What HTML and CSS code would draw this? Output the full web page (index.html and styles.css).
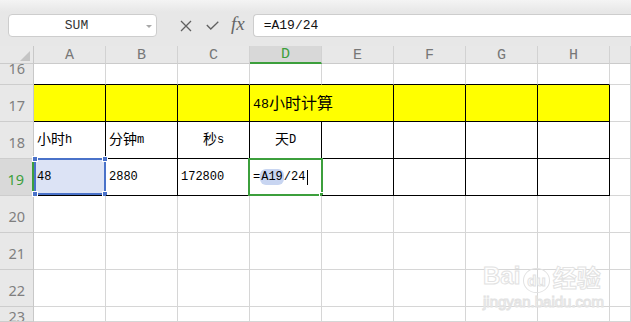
FILE: index.html
```html
<!DOCTYPE html>
<html lang="zh">
<head>
  <meta charset="UTF-8">
  <title>48小时计算</title>
  <link rel="stylesheet" href="styles.css">
</head>
<body>
  <div class="app">
    <div class="toolbar">
      <div class="namebox"><span>SUM</span><i class="caret"></i></div>
      <div class="tools">
        <svg class="ico" width="12" height="12" viewBox="0 0 12 12"><path d="M1 1 L11 11 M11 1 L1 11" stroke="#606060" stroke-width="1.3" fill="none"/></svg>
        <svg class="ico ok" width="13" height="9" viewBox="0 0 13 9"><path d="M0.8 4 L4.8 8 L12.3 0.8" stroke="#606060" stroke-width="1.3" fill="none"/></svg>
        <span class="fx">fx</span>
      </div>
      <div class="formula">=A19/24</div>
    </div>

    <div class="sheet">
      <!-- column header -->
      <div class="hd corner"><i class="tri"></i></div>
      <div class="hd">A</div>
      <div class="hd">B</div>
      <div class="hd">C</div>
      <div class="hd cur">D</div>
      <div class="hd">E</div>
      <div class="hd">F</div>
      <div class="hd">G</div>
      <div class="hd">H</div>
      <div class="hd"></div>

      <!-- 16 -->
      <div class="rh r16">16</div>
      <div class="c kb"></div><div class="c kb"></div><div class="c kb"></div><div class="c kb"></div>
      <div class="c kb"></div><div class="c kb"></div><div class="c kb"></div><div class="c kb"></div>
      <div class="c"></div>

      <!-- 17 -->
      <div class="rh">17</div>
      <div class="c k yl"></div>
      <div class="c k yl"></div>
      <div class="c k yl"></div>
      <div class="c k yl title">48<span class="cj">小时计算</span></div>
      <div class="c k yl"></div>
      <div class="c k yl"></div>
      <div class="c k yl"></div>
      <div class="c"></div>

      <!-- 18 -->
      <div class="rh">18</div>
      <div class="c k"><span class="cj">小时</span>h</div>
      <div class="c k"><span class="cj">分钟</span>m</div>
      <div class="c k mid"><span class="cj">秒</span>s</div>
      <div class="c k mid"><span class="cj">天</span>D</div>
      <div class="c k"></div>
      <div class="c k"></div>
      <div class="c k"></div>
      <div class="c k"></div>
      <div class="c"></div>

      <!-- 19 -->
      <div class="rh cur">19</div>
      <div class="c k sel">48
        <div class="sel-box"><i class="h tl"></i><i class="h tr"></i><i class="h bl"></i><i class="h br"></i></div>
      </div>
      <div class="c k">2880</div>
      <div class="c k">172800</div>
      <div class="c k">=<span class="ref">A19</span>/24<i class="caret-line"></i>
        <div class="edit-box"><i class="fill"></i></div>
      </div>
      <div class="c k"></div>
      <div class="c k"></div>
      <div class="c k"></div>
      <div class="c k"></div>
      <div class="c"></div>

      <!-- 20 -->
      <div class="rh">20</div>
      <div class="c"></div><div class="c"></div><div class="c"></div><div class="c"></div>
      <div class="c"></div><div class="c"></div><div class="c"></div><div class="c"></div>
      <div class="c"></div>

      <!-- 21 -->
      <div class="rh">21</div>
      <div class="c"></div><div class="c"></div><div class="c"></div><div class="c"></div>
      <div class="c"></div><div class="c"></div><div class="c"></div><div class="c"></div>
      <div class="c"></div>

      <!-- 22 -->
      <div class="rh">22</div>
      <div class="c"></div><div class="c"></div><div class="c"></div><div class="c"></div>
      <div class="c"></div><div class="c"></div><div class="c"></div><div class="c"></div>
      <div class="c"></div>

      <!-- 23 -->
      <div class="rh">23</div>
      <div class="c"></div><div class="c"></div><div class="c"></div><div class="c"></div>
      <div class="c"></div><div class="c"></div><div class="c"></div><div class="c"></div>
      <div class="c"></div>
    </div>

    <div class="watermark">
      <div class="wm-big">Bai<span class="paw">du</span>经验</div>
      <div class="wm-small">jingyan.baidu.com</div>
    </div>
  </div>
</body>
</html>
```

FILE: styles.css
```css
:root {
  --grid: #d6d6d6;
  --head: #e8e8e8;
  --green: #3c9f3c;
  --blue: #4a72c9;
}

* {
  box-sizing: border-box;
}

body {
  margin: 0;
  width: 631px;
  height: 322px;
  overflow: hidden;
  font-family: "Liberation Mono", "Noto Sans CJK SC", monospace;
  background: #fff;
}

.app {
  position: relative;
  display: flex;
  flex-direction: column;
  height: 322px;
}

/* formula bar */
.toolbar {
  height: 46px;
  display: flex;
  align-items: flex-start;
  padding-top: 14px;
  background: linear-gradient(#f4f4f4 0, #e7e7e7 12px, #e7e7e7 100%);
}

.namebox {
  margin-left: 8px;
  width: 149px;
  height: 23px;
  background: #fff;
  border: 1px solid #cdcdcd;
  border-radius: 4px;
  display: flex;
  align-items: center;
  justify-content: center;
  padding-right: 12px;
  position: relative;
  font-size: 13px;
  color: #333;
}

.caret {
  position: absolute;
  right: 4px;
  top: 10px;
  border-left: 3px solid transparent;
  border-right: 3px solid transparent;
  border-top: 3px solid #a8a8a8;
}

.tools {
  display: flex;
  align-items: center;
  height: 23px;
  padding-left: 23px;
  gap: 14px;
}

.fx {
  font-family: "Liberation Serif", serif;
  font-style: italic;
  font-size: 19px;
  color: #666;
  margin-left: -2px;
  margin-top: -3px;
}

.formula {
  margin-left: 8px;
  flex: 1;
  height: 23px;
  background: #fff;
  border: 1px solid #cdcdcd;
  border-right: none;
  border-radius: 4px 0 0 4px;
  padding-left: 10px;
  display: flex;
  align-items: center;
  font-size: 13px;
  color: #111;
}

/* sheet */
.sheet {
  flex: 1;
  display: grid;
  grid-template-columns: 34px repeat(8, 72px) 1fr;
  grid-template-rows: 18px 21px repeat(6, 37px) 1fr;
  overflow: hidden;
}

.hd {
  background: var(--head);
  border-right: 1px solid #d2d2d2;
  border-bottom: 1px solid #cbcbcb;
  display: flex;
  align-items: center;
  justify-content: center;
  font-size: 15px;
  color: #777;
  padding-top: 1px;
}

.hd.cur {
  background: #d8d8d8;
  color: var(--green);
  border-bottom: 2px solid var(--green);
}

.corner {
  position: relative;
  border-right-color: #c8c8c8;
}

.tri {
  position: absolute;
  right: 3px;
  bottom: 2px;
  border-left: 10px solid transparent;
  border-bottom: 10px solid #c4c4c4;
}

.rh {
  background: var(--head);
  border-right: 1px solid #c8c8c8;
  border-bottom: 1px solid #cdcdcd;
  display: flex;
  align-items: center;
  justify-content: flex-end;
  padding: 4px 8px 0 0;
  font-family: "Noto Sans", sans-serif;
  font-size: 14.5px;
  color: #7f7f7f;
  overflow: hidden;
}

.rh.r16 {
  align-items: flex-end;
  padding: 0 8px 6px 0;
}

.rh.cur {
  background: #d9d9d9;
  color: var(--green);
  border-right: 2px solid var(--green);
}

.c {
  position: relative;
  border-right: 1px solid var(--grid);
  border-bottom: 1px solid var(--grid);
  display: flex;
  align-items: center;
  padding-left: 3px;
  font-size: 12px;
  line-height: 16px;
  color: #000;
  white-space: nowrap;
}

.c.k {
  border-right-color: #000;
  border-bottom-color: #000;
}

.c.kb {
  border-bottom-color: #000;
}

.c.yl {
  background: #ffff00;
}

.c.title {
  grid-column: span 2;
  font-size: 13.3px;
  padding-top: 4px;
}

.c.title .cj {
  font-size: 16px;
}

.c.mid {
  justify-content: center;
  padding-left: 0;
}

.cj {
  font-size: 14px;
}

/* selected A19 */
.c.sel {
  background: #dce3f5;
}

.sel-box {
  position: absolute;
  top: -1px;
  left: 0;
  right: -1px;
  bottom: 0;
  border: 2px solid var(--blue);
}

.h {
  position: absolute;
  width: 6px;
  height: 6px;
  background: var(--blue);
  border: 1px solid #fff;
}

.tl { left: -4px; top: -4px; }
.tr { right: -4px; top: -4px; }
.bl { left: -4px; bottom: -4px; }
.br { right: -4px; bottom: -4px; }

/* editing D19 */
.ref {
  background: #c8d5f1;
  border-radius: 6px;
  padding: 0 1px;
}

.caret-line {
  width: 1px;
  height: 15px;
  background: #000;
  margin-left: 2px;
}

.edit-box {
  position: absolute;
  top: -1px;
  left: -2px;
  right: -2px;
  bottom: -1px;
  border: 2px solid var(--green);
}

.fill {
  position: absolute;
  right: -3px;
  bottom: -3px;
  width: 5px;
  height: 5px;
  background: var(--green);
  border: 1px solid #fff;
}

/* watermark */
.watermark {
  position: absolute;
  left: 483px;
  top: 258px;
  font-family: "Liberation Sans", "Noto Sans CJK SC", sans-serif;
  color: rgba(255, 255, 255, 0.85);
  -webkit-text-stroke: 1px #e2e2e2;
}

.wm-big {
  font-size: 24px;
  font-weight: bold;
  display: flex;
  align-items: center;
  height: 36px;
}

.paw {
  font-size: 15px;
  border: 1px solid #e2e2e2;
  border-radius: 50%;
  padding: 3px 3px;
  margin: 8px 3px 0;
}

.wm-small {
  font-size: 15px;
  margin-top: -1px;
}
```
